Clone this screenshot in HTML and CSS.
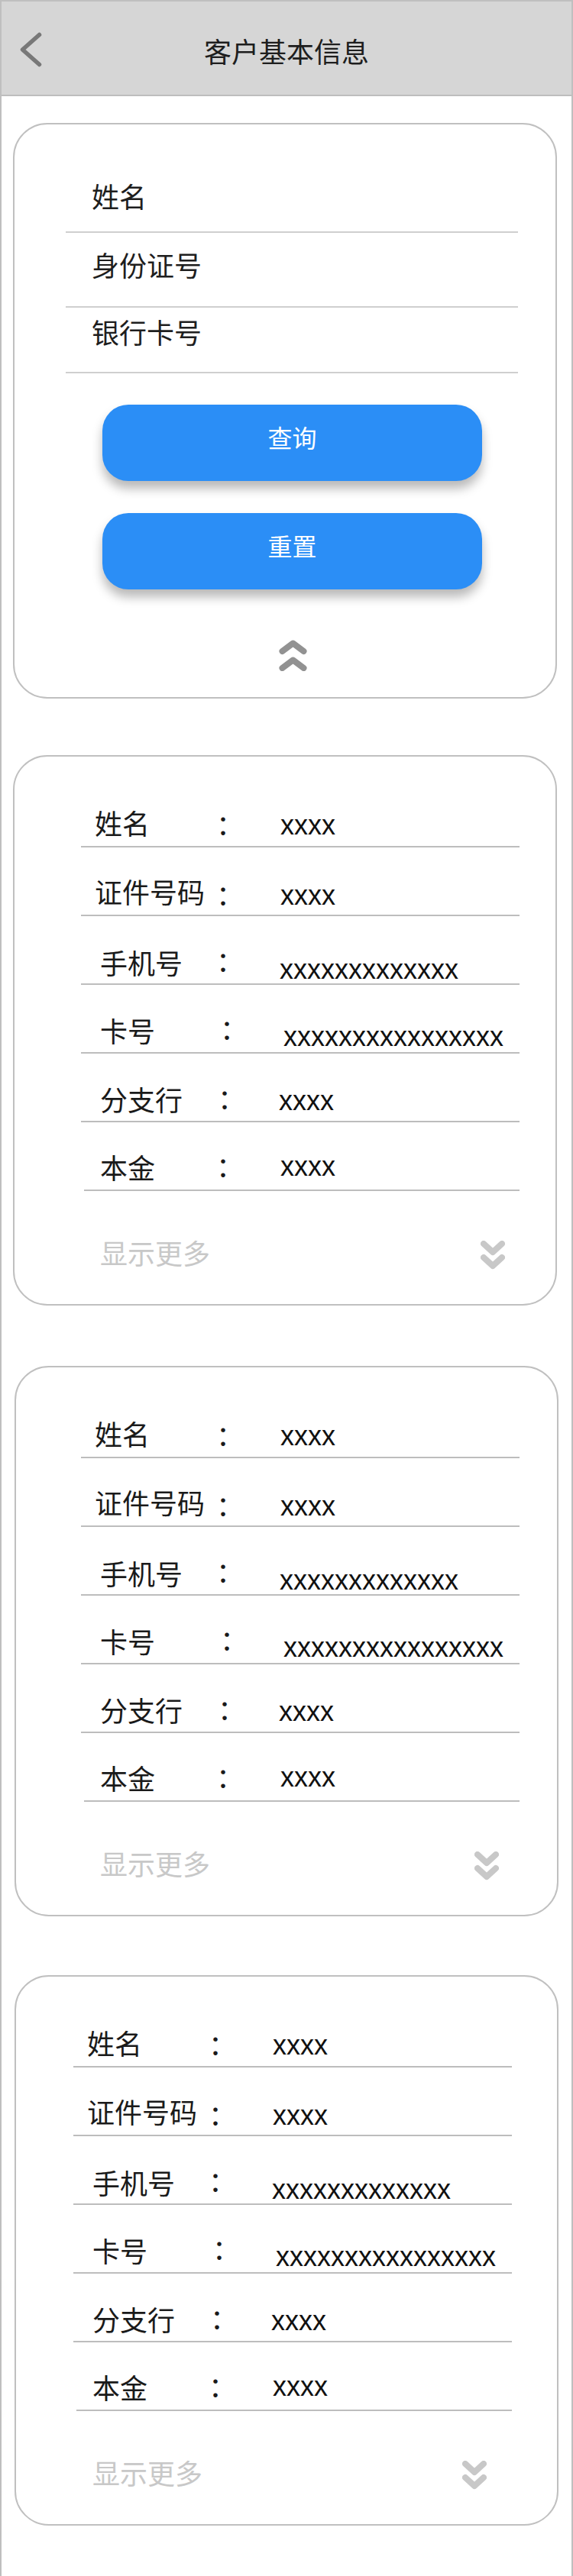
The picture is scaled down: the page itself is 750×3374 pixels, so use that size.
FILE: index.html
```html
<!DOCTYPE html>
<html lang="zh-CN">
<head>
<meta charset="utf-8">
<title>客户基本信息</title>
<link rel="stylesheet" href="styles.css">
</head>
<body>
<div class="page">
  <header class="topbar">
    <svg class="back" viewBox="0 0 34 48" width="34" height="48"><polyline points="27.5,4.5 5.5,24 27.5,43.5"/></svg>
    <h1 class="title">客户基本信息</h1>
  </header>

  <section class="card search">
    <div class="search-body">
      <div class="qrow q1">姓名</div>
      <div class="qrow q2">身份证号</div>
      <div class="qrow q3">银行卡号</div>
      <button class="btn btn-query">查询</button>
      <button class="btn btn-reset">重置</button>
      <svg class="collapse" viewBox="0 0 37 41" width="37" height="41"><polyline points="4.5,15 18.5,4.5 32.5,15"/><polyline points="4.5,37 18.5,26.5 32.5,37"/></svg>
    </div>
  </section>

  <section class="card info info-a">
    <div class="info-body">
      <div class="drow"><span class="lbl">姓名</span><span class="colon">：</span><span class="val">xxxx</span></div>
      <div class="drow"><span class="lbl">证件号码</span><span class="colon">：</span><span class="val">xxxx</span></div>
      <div class="drow"><span class="lbl">手机号</span><span class="colon">：</span><span class="val">xxxxxxxxxxxxx</span></div>
      <div class="drow"><span class="lbl">卡号</span><span class="colon">：</span><span class="val">xxxxxxxxxxxxxxxx</span></div>
      <div class="drow"><span class="lbl">分支行</span><span class="colon">：</span><span class="val">xxxx</span></div>
      <div class="drow"><span class="lbl">本金</span><span class="colon">：</span><span class="val">xxxx</span></div>
      <div class="more"><span class="more-text">显示更多</span><svg class="expand" viewBox="0 0 32 38" width="32" height="38"><polyline points="4,4 16,15 28,4"/><polyline points="4,22 16,33 28,22"/></svg></div>
    </div>
  </section>

  <section class="card info info-b">
    <div class="info-body">
      <div class="drow"><span class="lbl">姓名</span><span class="colon">：</span><span class="val">xxxx</span></div>
      <div class="drow"><span class="lbl">证件号码</span><span class="colon">：</span><span class="val">xxxx</span></div>
      <div class="drow"><span class="lbl">手机号</span><span class="colon">：</span><span class="val">xxxxxxxxxxxxx</span></div>
      <div class="drow"><span class="lbl">卡号</span><span class="colon">：</span><span class="val">xxxxxxxxxxxxxxxx</span></div>
      <div class="drow"><span class="lbl">分支行</span><span class="colon">：</span><span class="val">xxxx</span></div>
      <div class="drow"><span class="lbl">本金</span><span class="colon">：</span><span class="val">xxxx</span></div>
      <div class="more"><span class="more-text">显示更多</span><svg class="expand" viewBox="0 0 32 38" width="32" height="38"><polyline points="4,4 16,15 28,4"/><polyline points="4,22 16,33 28,22"/></svg></div>
    </div>
  </section>

  <section class="card info info-c">
    <div class="info-body">
      <div class="drow"><span class="lbl">姓名</span><span class="colon">：</span><span class="val">xxxx</span></div>
      <div class="drow"><span class="lbl">证件号码</span><span class="colon">：</span><span class="val">xxxx</span></div>
      <div class="drow"><span class="lbl">手机号</span><span class="colon">：</span><span class="val">xxxxxxxxxxxxx</span></div>
      <div class="drow"><span class="lbl">卡号</span><span class="colon">：</span><span class="val">xxxxxxxxxxxxxxxx</span></div>
      <div class="drow"><span class="lbl">分支行</span><span class="colon">：</span><span class="val">xxxx</span></div>
      <div class="drow"><span class="lbl">本金</span><span class="colon">：</span><span class="val">xxxx</span></div>
      <div class="more"><span class="more-text">显示更多</span><svg class="expand" viewBox="0 0 32 38" width="32" height="38"><polyline points="4,4 16,15 28,4"/><polyline points="4,22 16,33 28,22"/></svg></div>
    </div>
  </section>
</div>
</body>
</html>
```

FILE: styles.css
```css
* { box-sizing: border-box; }

body {
  margin: 0;
  background: #ffffff;
  font-family: "Noto Sans CJK SC", "Liberation Sans", sans-serif;
  color: #1a1a1a;
}

.page {
  width: 750px;
  height: 3374px;
  border: 2px solid #bfbfbf;
  border-bottom: none;
  overflow: hidden;
}

/* header */
.topbar {
  display: grid;
  height: 124px;
  background: #d6d6d6;
  border-bottom: 2px solid #bdbdbd;
}
.topbar > * { grid-area: 1 / 1; align-self: start; }
.back {
  justify-self: start;
  margin: 39px 0 0 22px;
  fill: none;
  stroke: #787878;
  stroke-width: 5.5;
  stroke-linecap: round;
  stroke-linejoin: round;
}
.title {
  justify-self: stretch;
  margin: 46px 0 0;
  text-align: center;
  font-size: 36px;
  line-height: 36px;
  font-weight: 400;
  color: #1e1e1e;
}

/* cards */
.card {
  width: 712px;
  margin: 35px 0 0 15px;
  border: 2px solid #c0c0c0;
  border-radius: 45px;
  background: #fff;
}
.info-a { margin-top: 74px; }
.info-b { margin-top: 79px; margin-left: 17px; }
.info-c { margin-top: 77px; margin-left: 17px; }

/* search card */
.search-body {
  width: 592px;
  margin-left: 67px;
  padding-bottom: 34px;
}
.qrow {
  font-size: 36px;
  line-height: 36px;
  padding-left: 34px;
  border-bottom: 2px solid #cfcfcf;
  color: #1e1e1e;
}
.q1 { padding-top: 75px; padding-bottom: 29px; }
.q2 { padding-top: 23px; padding-bottom: 37px; }
.q3 { padding-top: 13px; padding-bottom: 35px; }

.btn {
  display: flex;
  align-items: center;
  justify-content: center;
  width: 497px;
  height: 100px;
  margin-left: 48px;
  padding: 0 0 16px;
  border: none;
  border-radius: 34px;
  background: #2b8ef6;
  color: #ffffff;
  font-family: "Noto Sans CJK SC", sans-serif;
  font-size: 32px;
  line-height: 32px;
  box-shadow: 0 10px 14px rgba(0, 0, 0, 0.28);
}
.btn-query { margin-top: 41px; }
.btn-reset { margin-top: 42px; }

.collapse {
  display: block;
  margin: 66px 0 0 279px;
  fill: none;
  stroke: #929292;
  stroke-width: 8;
  stroke-linecap: round;
  stroke-linejoin: round;
}

/* info cards */
.info-body {
  width: 574px;
  margin-left: 87px;
  padding-top: 29px;
  padding-bottom: 44px;
}
.info-b .info-body { margin-left: 85px; }
.info-c .info-body { margin-left: 75px; }

.drow {
  display: grid;
  height: 90px;
  border-bottom: 2px solid #bdbdbd;
}
.drow > * {
  grid-area: 1 / 1;
  align-self: start;
  justify-self: start;
  font-size: 36px;
  line-height: 36px;
  white-space: nowrap;
}
.lbl { color: #1a1a1a; }
.colon { color: #1a1a1a; }
.val { font-family: "Liberation Sans", sans-serif; color: #111111; }

.drow:nth-child(1) .lbl { margin: 39px 0 0 18px; }
.drow:nth-child(1) .colon { margin: 40px 0 0 177px; }
.drow:nth-child(1) .val { margin: 43px 0 0 261px; }

.drow:nth-child(2) .lbl { margin: 39px 0 0 18px; }
.drow:nth-child(2) .colon { margin: 42px 0 0 177px; }
.drow:nth-child(2) .val { margin: 45px 0 0 261px; }

.drow:nth-child(3) .lbl { margin: 42px 0 0 25px; }
.drow:nth-child(3) .colon { margin: 39px 0 0 177px; }
.drow:nth-child(3) .val { margin: 52px 0 0 260px; }

.drow:nth-child(4) .lbl { margin: 41px 0 0 25px; }
.drow:nth-child(4) .colon { margin: 38px 0 0 182px; }
.drow:nth-child(4) .val { margin: 50px 0 0 265px; }

.drow:nth-child(5) .lbl { margin: 41px 0 0 25px; }
.drow:nth-child(5) .colon { margin: 39px 0 0 179px; }
.drow:nth-child(5) .val { margin: 44px 0 0 259px; }

.drow:nth-child(6) { margin-left: 4px; }
.drow:nth-child(6) .lbl { margin: 40px 0 0 21px; }
.drow:nth-child(6) .colon { margin: 38px 0 0 173px; }
.drow:nth-child(6) .val { margin: 40px 0 0 257px; }

.more {
  display: grid;
  height: 42px;
  margin-top: 62px;
}
.more > * { grid-area: 1 / 1; align-self: start; justify-self: start; }
.more-text {
  margin-left: 25px;
  font-size: 36px;
  line-height: 36px;
  color: #c8c8c8;
}
.expand {
  margin: 3px 0 0 523px;
  fill: none;
  stroke: #c8c8c8;
  stroke-width: 8;
  stroke-linecap: round;
  stroke-linejoin: round;
}
.info-b .expand { margin-left: 515px; }
.info-c .expand { margin-left: 509px; }
```
